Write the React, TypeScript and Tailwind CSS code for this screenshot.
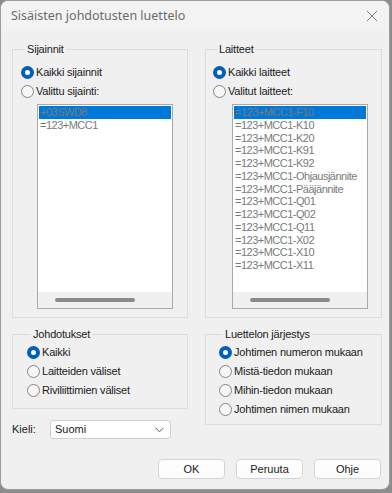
import React from "react";

const UI = { fontFamily: '"Liberation Sans", Arial, sans-serif' };

function Radio({ checked, label, className = "" }: { checked?: boolean; label: string; className?: string }) {
  return (
    <div className={"flex items-center h-[19px] " + className}>
      {checked ? (
        <div className="w-[13px] h-[13px] rounded-full bg-[#005fb8] flex items-center justify-center shrink-0">
          <div className="w-[5px] h-[5px] rounded-full bg-white" />
        </div>
      ) : (
        <div className="w-[13px] h-[13px] rounded-full border border-[#858585] bg-[#f6f6f6] shrink-0" />
      )}
      <span className="ml-[2px] text-[11px] leading-[13px] tracking-[-0.2px] text-[#1b1b1b]">{label}</span>
    </div>
  );
}

function Group({ title, className = "", children }: { title: string; className?: string; children: React.ReactNode }) {
  return (
    <fieldset className={"border border-[#dcdcdc] " + className}>
      <legend className="ml-[4px] px-[2px] text-[11px] leading-[16px] tracking-[-0.2px] text-[#1b1b1b]">{title}</legend>
      {children}
    </fieldset>
  );
}

function ListBox({ items, className = "" }: { items: string[]; className?: string }) {
  return (
    <div className={"w-[136px] h-[205px] border border-[#a9a9a9] bg-white flex flex-col " + className}>
      <div className="flex-1 pt-[1px] px-[1px] overflow-hidden">
        {items.map((t, i) => (
          <div
            key={t}
            className={
              "h-[12.75px] leading-[12.75px] pl-[1px] text-[11px] tracking-[-0.5px] whitespace-nowrap text-[#7a7a7a] " +
              (i === 0 ? "bg-[#0078d7]" : "")
            }
          >
            {t}
          </div>
        ))}
      </div>
      <div className="h-[16px] bg-[#f0f0f0] flex items-center">
        <div className="ml-[17px] w-[80px] h-[4px] rounded-full bg-[#8a8a8a]" />
      </div>
    </div>
  );
}

export default function App() {
  const devices = [
    "=123+MCC1-F10",
    "=123+MCC1-K10",
    "=123+MCC1-K20",
    "=123+MCC1-K91",
    "=123+MCC1-K92",
    "=123+MCC1-Ohjausjännite",
    "=123+MCC1-Pääjännite",
    "=123+MCC1-Q01",
    "=123+MCC1-Q02",
    "=123+MCC1-Q11",
    "=123+MCC1-X02",
    "=123+MCC1-X10",
    "=123+MCC1-X11",
  ];
  return (
    <div className="w-[392px] h-[493px] bg-[#8c8c8c] overflow-hidden" style={UI}>
      <div className="w-[390px] h-[490px] rounded-[8px] border border-[#9c9c9c] bg-[#f0f0f0] overflow-hidden flex flex-col">
        {/* title bar */}
        <div className="h-[30px] bg-[#f3f3f3] flex items-center justify-between pl-[10px] pr-[9px]">
          <span className="text-[12.5px] text-[#6b6b6b]" style={{ fontFamily: '"Noto Sans", "Open Sans", sans-serif' }}>
            Sisäisten johdotusten luettelo
          </span>
          <svg width="12" height="12" viewBox="0 0 12 12" className="mr-[2px]">
            <path d="M1 1 L11 11 M11 1 L1 11" stroke="#7a7a7a" strokeWidth="1" />
          </svg>
        </div>
        {/* body */}
        <div className="flex-1 pl-[11px] pr-[7px] pt-[10px]">
          <div className="flex gap-[17px]">
            {/* left column */}
            <div className="w-[176px] flex flex-col">
              <Group title="Sijainnit" className="h-[277px] pl-[8px]">
                <div className="pt-[6px]">
                  <Radio checked label="Kaikki sijainnit" />
                  <Radio label="Valittu sijainti:" />
                  <ListBox className="mt-[3px] ml-[16px]" items={["+03SWD8", "=123+MCC1"]} />
                </div>
              </Group>
              <Group title="Johdotukset" className="mt-[8px] h-[83px] pl-[14px]">
                <div className="pt-[1px]">
                  <Radio checked label="Kaikki" />
                  <Radio label="Laitteiden väliset" />
                  <Radio label="Riviliittimien väliset" />
                </div>
              </Group>
              <div className="mt-[11px] flex items-center">
                <span className="w-[38px] text-[11px] text-[#1b1b1b]">Kieli:</span>
                <div className="w-[121px] h-[19px] bg-white border border-[#d0d0d0] rounded-[3px] flex items-center justify-between pl-[4px] pr-[6px]">
                  <span className="text-[11px] text-[#1b1b1b]">Suomi</span>
                  <svg width="9" height="6" viewBox="0 0 9 6">
                    <path d="M0.5 0.8 L4.5 4.8 L8.5 0.8" stroke="#5a5a5a" strokeWidth="1" fill="none" />
                  </svg>
                </div>
              </div>
            </div>
            {/* right column */}
            <div className="w-[177px] flex flex-col">
              <Group title="Laitteet" className="h-[277px] pl-[7px]">
                <div className="pt-[6px]">
                  <Radio checked label="Kaikki laitteet" />
                  <Radio label="Valitut laitteet:" />
                  <ListBox className="mt-[3px] ml-[19px]" items={devices} />
                </div>
              </Group>
              <Group title="Luettelon järjestys" className="mt-[8px] h-[99px] pl-[13px]">
                <div className="pt-[1px]">
                  <Radio checked label="Johtimen numeron mukaan" />
                  <Radio label="Mistä-tiedon mukaan" />
                  <Radio label="Mihin-tiedon mukaan" />
                  <Radio label="Johtimen nimen mukaan" />
                </div>
              </Group>
            </div>
          </div>
          <div className="mt-[20px] flex justify-end gap-[11px] pr-[1px]">
            {["OK", "Peruuta", "Ohje"].map((b) => (
              <button
                key={b}
                className="w-[67px] h-[20px] bg-[#fdfdfd] border border-[#d4d4d4] rounded-[4px] text-[11px] text-[#1b1b1b] flex items-center justify-center"
              >
                {b}
              </button>
            ))}
          </div>
        </div>
      </div>
    </div>
  );
}
